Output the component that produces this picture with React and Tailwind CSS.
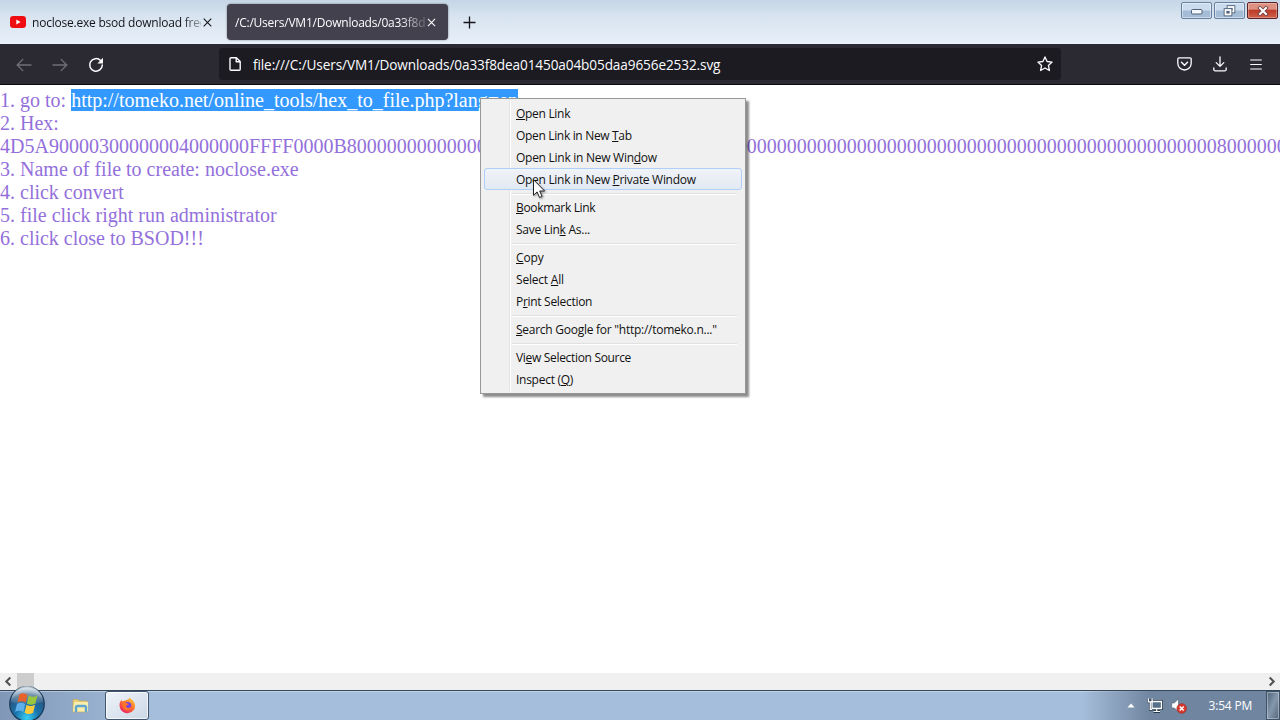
import React from "react";

const UI = "font-['Open_Sans','Noto_Sans',sans-serif]";

function MenuItem({ text, mark, active, spacing }) {
  const [before, after] = [text.slice(0, mark), text.slice(mark + 1)];
  return (
    <div
      className={
        "mx-[3px] flex h-[22px] shrink-0 items-center whitespace-pre pt-[2px] pl-[31px] " +
        (active
          ? "relative rounded-[3px] border border-[#aecff7] bg-linear-to-b from-[#f0f3f8] to-[#e3e9f3]"
          : "border border-transparent")
      }
    >
      <span className={spacing}>
        {before}
        <span className="underline decoration-1 underline-offset-1">{text[mark]}</span>
        {after}
      </span>
    </div>
  );
}

function Separator() {
  return <div className="mt-[3px] mr-[8px] mb-[1px] ml-[31px] h-[2px] shrink-0 border-t border-b border-t-[#e0e0e0] border-b-white" />;
}

function ContextMenu() {
  return (
    <div className={"absolute left-[480px] top-[98px] flex h-[296px] w-[266px] flex-col overflow-visible border border-[#979797] bg-[#f0f0f0] py-[3px] text-[12px] text-[#111] shadow-[3px_3px_2px_rgba(0,0,0,0.45)] " + UI}>
      <div className="absolute top-[2px] bottom-[2px] left-[28px] w-[2px] border-l border-r border-l-[#e3e3e3] border-r-white" />
      <MenuItem text="Open Link" mark={0} spacing="tracking-[-0.3px]" />
      <MenuItem text="Open Link in New Tab" mark={17} spacing="tracking-[-0.33px]" />
      <MenuItem text="Open Link in New Window" mark={20} spacing="tracking-[-0.27px]" />
      <MenuItem text="Open Link in New Private Window" mark={17} active spacing="tracking-[-0.3px]" />
      <Separator />
      <MenuItem text="Bookmark Link" mark={0} spacing="tracking-[-0.33px]" />
      <MenuItem text="Save Link As..." mark={8} spacing="tracking-[-0.27px]" />
      <Separator />
      <MenuItem text="Copy" mark={0} spacing="tracking-[-0.1px]" />
      <MenuItem text="Select All" mark={7} spacing="tracking-[-0.2px]" />
      <MenuItem text="Print Selection" mark={1} spacing="tracking-[-0.3px]" />
      <Separator />
      <MenuItem text={'Search Google for "http://tomeko.n..."'} mark={0} spacing="tracking-[-0.26px]" />
      <Separator />
      <MenuItem text="View Selection Source" mark={2} spacing="tracking-[-0.32px]" />
      <MenuItem text="Inspect (Q)" mark={9} spacing="tracking-[-0.27px]" />
    </div>
  );
}

function WindowButtons() {
  return (
    <div className="ml-auto flex gap-[2px] self-start pt-[2px] pr-[2px]">
      <div className="flex h-[17px] w-[31px] items-center justify-center rounded-[2px] border border-[#66809f] bg-linear-to-b from-[#cbdcee] from-45% to-[#a5bcd6] to-55% shadow-[inset_0_0_0_1px_rgba(255,255,255,0.45)]">
        <svg width="12" height="6" viewBox="0 0 12 6" className="mt-[3px]"><rect x=".5" y=".5" width="10.5" height="4.5" rx="1" fill="#f6f9fc" stroke="#4e6179" /></svg>
      </div>
      <div className="flex h-[17px] w-[31px] items-center justify-center rounded-[2px] border border-[#66809f] bg-linear-to-b from-[#cbdcee] from-45% to-[#a5bcd6] to-55% shadow-[inset_0_0_0_1px_rgba(255,255,255,0.45)]">
        <svg width="13" height="12" viewBox="0 0 13 12" fill="none">
          <rect x="5.5" y="2" width="5" height="4.5" stroke="#4e6179" strokeWidth="3.6" />
          <rect x="5.5" y="2" width="5" height="4.5" stroke="#fff" strokeWidth="1.8" />
          <rect x="2.5" y="5" width="5" height="4.5" fill="#4e6179" stroke="#4e6179" strokeWidth="3.6" />
          <rect x="2.5" y="5" width="5" height="4.5" stroke="#fff" strokeWidth="1.8" />
        </svg>
      </div>
      <div className="flex h-[17px] w-[31px] items-center justify-center rounded-[2px] border border-[#5b2226] bg-linear-to-b from-[#dd9182] from-40% via-[#bd3d2a] via-50% to-[#d0604a] shadow-[inset_0_0_0_1px_rgba(255,255,255,0.3)]">
        <svg width="12" height="10" viewBox="0 0 12 10" fill="none" strokeLinecap="square">
          <path d="M3 2l6 6M9 2L3 8" stroke="#6b3b3e" strokeWidth="3.8" />
          <path d="M3 2l6 6M9 2L3 8" stroke="#fff" strokeWidth="2.1" />
        </svg>
      </div>
    </div>
  );
}

function TabBar() {
  return (
    <div className={"flex h-[44px] shrink-0 items-start bg-linear-to-b from-[#c5d6e6] via-[#d7e3ef] via-35% to-[#e8f0f9] text-[12px] " + UI}>
      <div className="flex h-[44px] w-[227px] items-center pl-[10px]">
        <svg width="16" height="12" viewBox="0 0 16 12"><rect width="16" height="12" rx="3.2" fill="#f00d12" /><path d="M6.3 3.4L10.6 6l-4.3 2.6z" fill="#fff" /></svg>
        <div className="ml-[6px] w-[169px] overflow-hidden whitespace-nowrap mask-r-from-89% mask-r-to-105% pt-[2px] text-[#15141a]">
          <span className="tracking-[-0.22px]">noclose.exe bsod download free</span>
        </div>
        <svg width="9" height="9" viewBox="0 0 9 9" className="ml-[2px]"><path d="M.7.7l7.6 7.6M8.3.7L.7 8.3" stroke="#15141a" strokeWidth="1.1" /></svg>
      </div>
      <div className="mt-[4px] flex h-[36px] w-[221px] items-center rounded-[4px] bg-[#42414d] pl-[8px] text-[#fbfbfe] shadow-[0_0_2px_rgba(0,0,0,0.5)]">
        <div className="w-[190px] overflow-hidden whitespace-nowrap mask-r-from-87% mask-r-to-103% pt-[2px]">
          <span className="tracking-[-0.23px]">/C:/Users/VM1/Downloads/0a33f8dea0</span>
        </div>
        <svg width="9" height="9" viewBox="0 0 9 9" className="ml-[2px]"><path d="M.9.9l7.2 7.2M8.1.9L.9 8.1" stroke="#fbfbfe" strokeWidth="1.1" /></svg>
      </div>
      <svg width="13" height="13" viewBox="0 0 13 13" className="mt-[16px] ml-[15px]"><path d="M6.5 .5v12M.5 6.5h12" stroke="#15141a" strokeWidth="1.3" /></svg>
      <WindowButtons />
    </div>
  );
}

function Toolbar() {
  return (
    <div className="flex h-[41px] shrink-0 items-center border-b border-[#0b0a10] bg-[#2b2a33]">
      <svg width="16" height="14" viewBox="0 0 16 14" fill="none" stroke="#706f78" strokeWidth="1.3" className="mt-px ml-[16px]" strokeLinecap="round"><path d="M15 7H1.2M6.8 1.4L1.2 7l5.6 5.6" /></svg>
      <svg width="16" height="14" viewBox="0 0 16 14" fill="none" stroke="#706f78" strokeWidth="1.3" className="mt-px ml-[20px]" strokeLinecap="round"><path d="M1 7h13.8M9.2 1.4L14.8 7l-5.6 5.6" /></svg>
      <svg width="16" height="16" viewBox="0 0 16 16" fill="none" className="mt-[2px] ml-[20px]"><path d="M12.6 3.6A6.3 6.3 0 1 0 14.3 8" stroke="#fbfbfe" strokeWidth="1.5" strokeLinecap="round" /><path d="M15 .8v5.6H9.4z" fill="#fbfbfe" /></svg>
      <div className={"ml-[115px] flex h-[32px] w-[842px] items-center rounded-[3px] bg-[#1c1b22] text-[#fbfbfe] " + UI}>
        <svg width="12" height="14" viewBox="0 0 12 14" fill="none" stroke="#fbfbfe" strokeWidth="1.4" strokeLinejoin="round" className="ml-[10px]"><path d="M2 .8h5.4l3.8 3.8v7.6a1 1 0 0 1-1 1H2a1 1 0 0 1-1-1V1.8a1 1 0 0 1 1-1z" /><path d="M7.2 1v3.8H11" /></svg>
        <span className="ml-[12px] pt-[3px] text-[13.6px] whitespace-nowrap tracking-[-0.11px]">file:///C:/Users/VM1/Downloads/0a33f8dea01450a04b05daa9656e2532.svg</span>
        <svg width="16" height="16" viewBox="0 0 16 16" fill="none" stroke="#fbfbfe" strokeWidth="1.3" strokeLinejoin="round" className="mr-[8px] ml-auto"><path d="M8 .9l2.1 4.6 5 .6-3.7 3.4 1 5L8 12l-4.4 2.5 1-5L.9 6.1l5-.6z" /></svg>
      </div>
      <svg width="15" height="14" viewBox="0 0 15 14" fill="none" stroke="#fbfbfe" strokeWidth="1.3" strokeLinecap="round" strokeLinejoin="round" className="ml-[115.5px]"><path d="M2 .9h11a1.2 1.2 0 0 1 1.2 1.2v4.2a6.7 6.7 0 0 1-13.4 0V2.1A1.2 1.2 0 0 1 2 .9z" /><path d="M4.5 5.3l3 2.9 3-2.9" strokeWidth="1.5" /></svg>
      <svg width="14" height="16" viewBox="0 0 14 16" fill="none" stroke="#fbfbfe" strokeWidth="1.3" strokeLinecap="round" strokeLinejoin="round" className="ml-[21px]"><path d="M7 .8v9.4M3.2 6.6L7 10.4l3.8-3.8M.8 11.8v1.6a1.4 1.4 0 0 0 1.4 1.4h9.6a1.4 1.4 0 0 0 1.4-1.4v-1.6" /></svg>
      <svg width="12" height="11" viewBox="0 0 12 11" stroke="#fbfbfe" strokeWidth="1.2" strokeLinecap="round" className="ml-[23.5px]"><path d="M.7 1h10.6M.7 5.5h10.6M.7 10h10.6" /></svg>
    </div>
  );
}

const HEX =
  "4D5A90000300000004000000FFFF0000B80000000000000040000000000000000000000000000000000000000000000000000000000000000000000080000000E1FBA0E";

function Page() {
  return (
    <div className="flex-1 overflow-hidden bg-white pt-[4px] font-['Liberation_Serif','Times_New_Roman',serif] text-[20px] leading-[23px] whitespace-nowrap text-[#9370db]">
      <p className="h-[23px]">1. go to: <span className="inline-block h-[22px] w-[447px] overflow-hidden bg-[#3399ff] align-top leading-[23px] text-white">http://tomeko.net/online_tools/hex_to_file.php?lang=en</span></p>
      <p>2. Hex:</p>
      <p>{HEX}</p>
      <p>3. Name of file to create: noclose.exe</p>
      <p>4. click convert</p>
      <p>5. file click right run administrator</p>
      <p>6. click close to BSOD!!!</p>
    </div>
  );
}

function ScrollBar() {
  return (
    <div className="flex h-[17px] shrink-0 items-center bg-[#f0f0f0]">
      <svg width="17" height="17" viewBox="0 0 17 17" fill="none" stroke="#505050" strokeWidth="2"><path d="M10.3 4.5l-4 4 4 4" /></svg>
      <div className="h-[17px] w-[17px] bg-[#cdcdcd]" />
      <svg width="17" height="17" viewBox="0 0 17 17" fill="none" stroke="#505050" strokeWidth="2" className="ml-auto"><path d="M6.7 4.5l4 4-4 4" /></svg>
    </div>
  );
}

function StartOrb() {
  return (
    <svg width="38" height="38" viewBox="0 0 38 38" className="absolute -top-[6px] left-[8px]">
      <defs>
        <radialGradient id="orb" cx=".5" cy=".9" r=".85"><stop offset="0" stopColor="#35d0f5" /><stop offset=".4" stopColor="#1b74ae" /><stop offset=".8" stopColor="#28557f" /><stop offset="1" stopColor="#9bb9d0" /></radialGradient>
        <linearGradient id="gloss" x1="0" y1="0" x2="0" y2="1"><stop offset="0" stopColor="#fff" stopOpacity=".65" /><stop offset="1" stopColor="#fff" stopOpacity=".05" /></linearGradient>
      </defs>
      <circle cx="19" cy="19" r="17.3" fill="url(#orb)" stroke="#1c3b58" strokeWidth="1.2" />
      <path d="M3 17a16 16 0 0 1 32 0q-16 5-32 0z" fill="url(#gloss)" />
      <path d="M11.3 9.5q4.2-2.8 8.2.2l-1.9 8q-4-2.6-8.2-.2z" fill="#e8622b" />
      <path d="M20.8 10.5q4.2 2.6 8.6 0l-2 8q-4.2 2.4-8.5 0z" fill="#9ac63d" />
      <path d="M9 18.9q4.2-2.4 8.2.2l-1.9 8q-4-2.6-8.2-.2z" fill="#5fb0ea" />
      <path d="M18.5 19.8q4.2 2.6 8.6 0l-2 8q-4.2 2.4-8.5 0z" fill="#fbcb3c" />
    </svg>
  );
}

function Taskbar() {
  return (
    <div className={"relative flex h-[30px] shrink-0 items-stretch border-t border-[#33475c] bg-linear-to-r from-[#8097b8] from-0% via-[#a5bedb] via-12% to-[#a5bedb] to-100% shadow-[inset_0_1px_0_rgba(255,255,255,0.35)] " + UI}>
      <StartOrb />
      <div className="flex w-[105px] items-center justify-end pr-[16px]">
        <svg width="17" height="16" viewBox="0 0 17 16">
          <path d="M1 1.5h5l1.2 1.4H15v11H1z" fill="#e9cf76" stroke="#c4a952" strokeWidth=".6" />
          <path d="M2 4h14v9.5H1z" fill="#f8edac" />
          <path d="M4 14V9.5a1.5 1.5 0 0 1 1.5-1.5h7A1.5 1.5 0 0 1 14 9.5V14" fill="none" stroke="#5fa6cf" strokeWidth="2.4" />
        </svg>
      </div>
      <div className="flex h-[29px] w-[44px] items-center justify-center rounded-[3px] border border-[#405570] bg-linear-to-br from-[#eef3f9] to-[#ccd8e6] shadow-[inset_0_0_0_1px_rgba(255,255,255,0.7)]">
        <svg width="17" height="17" viewBox="0 0 17 17">
          <defs><linearGradient id="fox" x1=".9" y1="0" x2=".2" y2="1"><stop offset="0" stopColor="#ffd83d" /><stop offset=".45" stopColor="#ff7a2a" /><stop offset="1" stopColor="#e8196c" /></linearGradient></defs>
          <path d="M10.5.5c1 1.2 2 1.8 3.3 3 2.6 2.6 3.1 6.5 1 9.6A8 8 0 0 1 .6 9.3C.3 6.7 1 4.6 2.6 2.8l.6 1.7 2.3-.8C7 3 9.8 3 10.5.5z" fill="url(#fox)" />
          <circle cx="8.6" cy="8.6" r="3.7" fill="#7542e5" />
          <path d="M3.5 5.2c2-.6 3.4.2 4.6 1.3l1.8.4c-.6 1.4-2.9 1.3-3.2 2.7 1.3 2 4 1.7 5.6 0-.4 3-3 4.4-5.5 3.6C4 12.2 2.8 8.5 3.5 5.2z" fill="#ff7528" />
        </svg>
      </div>
      <div className="ml-auto flex w-[198px] items-center justify-end bg-linear-to-r from-transparent to-[#70859f] to-35%">
        <svg width="8" height="5" viewBox="0 0 8 5"><path d="M4 .5L7.6 4.5H.4z" fill="#fff" /></svg>
        <svg width="16" height="15" viewBox="0 0 16 15" fill="none" className="ml-[12px]">
          <path d="M5 3.5h9.5v7H5zM9.7 10.5v3M6.5 13.5h6.5" stroke="#27384a" strokeWidth="3" />
          <path d="M2 1v3h3V1M3.5 4v7.5h2" stroke="#27384a" strokeWidth="2.6" />
          <path d="M5 3.5h9.5v7H5z" fill="#58718b" stroke="#fff" strokeWidth="1.3" />
          <path d="M9.7 10.5v3M6.5 13.5h6.5M1.5 .5v3.3h3.6V.5M3.3 4v7.5H5" stroke="#fff" strokeWidth="1.2" />
        </svg>
        <svg width="16" height="16" viewBox="0 0 16 16" className="ml-[8px]">
          <path d="M.7 5h2.5L7.5 1v12.5L3.2 10H.7z" fill="#fff" stroke="#4d6075" strokeWidth=".6" />
          <circle cx="10.7" cy="10.5" r="4.8" fill="#d93a30" stroke="#a1221d" strokeWidth=".6" />
          <path d="M8.7 8.5l4 4M12.7 8.5l-4 4" stroke="#fff" strokeWidth="1.5" />
        </svg>
        <span className="ml-[22px] pt-px text-[12px] tracking-[-0.2px] whitespace-nowrap text-white">3:54 PM</span>
        <div className="ml-[14px] h-[29px] w-[14px] border border-[#3f5166] bg-linear-to-br from-[#52667c] via-[#8497ac] to-[#52667c] shadow-[inset_0_0_0_1px_rgba(255,255,255,0.35)]" />
      </div>
    </div>
  );
}

export default function App() {
  return (
    <div className="relative flex h-[720px] w-[1280px] flex-col overflow-hidden bg-white">
      <TabBar />
      <Toolbar />
      <Page />
      <ScrollBar />
      <Taskbar />
      <ContextMenu />
      <svg width="14" height="21" viewBox="0 0 14 21" className="absolute top-[179px] left-[533px] drop-shadow-[1px_1px_1px_rgba(0,0,0,0.4)]">
        <path d="M.5.7v15.6l3.6-3.4 2.4 5.6 2.6-1.1-2.4-5.4h4.9z" fill="#fff" stroke="#222" strokeWidth="1" />
      </svg>
    </div>
  );
}
